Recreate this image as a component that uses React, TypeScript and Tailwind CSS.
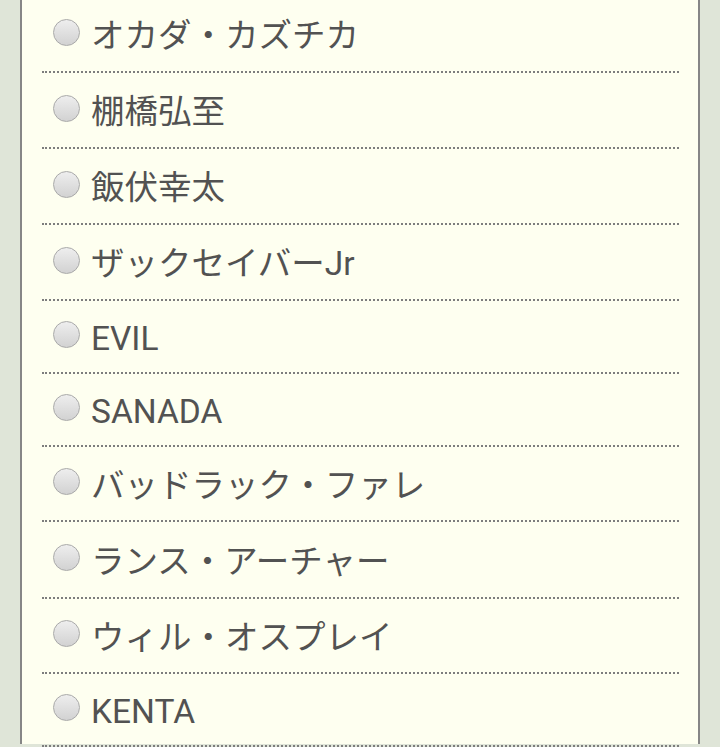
import React from 'react';

const players = [
  { name: 'オカダ・カズチカ', h: 'h-[74px]' },
  { name: '棚橋弘至', h: 'h-[74px]' },
  { name: '飯伏幸太', h: 'h-[74px]' },
  { name: 'ザックセイバーJr', h: 'h-[74px]' },
  { name: 'EVIL', h: 'h-[71px]' },
  { name: 'SANADA', h: 'h-[71px]' },
  { name: 'バッドラック・ファレ', h: 'h-[73px]' },
  { name: 'ランス・アーチャー', h: 'h-[75px]' },
  { name: 'ウィル・オスプレイ', h: 'h-[73px]' },
  { name: 'KENTA', h: 'h-[71px]' },
];

export default function App() {
  return (
    <div className="h-[747px] overflow-hidden bg-[#dfe5d8] pl-[20px] pr-[20px]">
      <div className="h-full border-x-2 border-[#868686] bg-[#fefff0] pl-5 pr-[19px]">
        <ul className="-mt-[3px]" style={{ fontFamily: 'Roboto, "Noto Sans CJK JP", sans-serif' }}>
          {players.map((p) => (
            <li key={p.name} className="border-b-2 border-dotted border-[#7d7d7d]">
              <label className={`flex ${p.h} items-center pl-[11px] pt-[4px] text-[33.5px] leading-[40px] text-[#525252]`}>
                <input
                  type="radio"
                  name="player"
                  className="-mt-[8px] mr-[11px] h-[27px] w-[27px] shrink-0 appearance-none rounded-full border border-[#a9a9a9] bg-gradient-to-b from-[#eeeeee] to-[#d2d2d2]"
                />
                <span>{p.name}</span>
              </label>
            </li>
          ))}
        </ul>
      </div>
    </div>
  );
}
